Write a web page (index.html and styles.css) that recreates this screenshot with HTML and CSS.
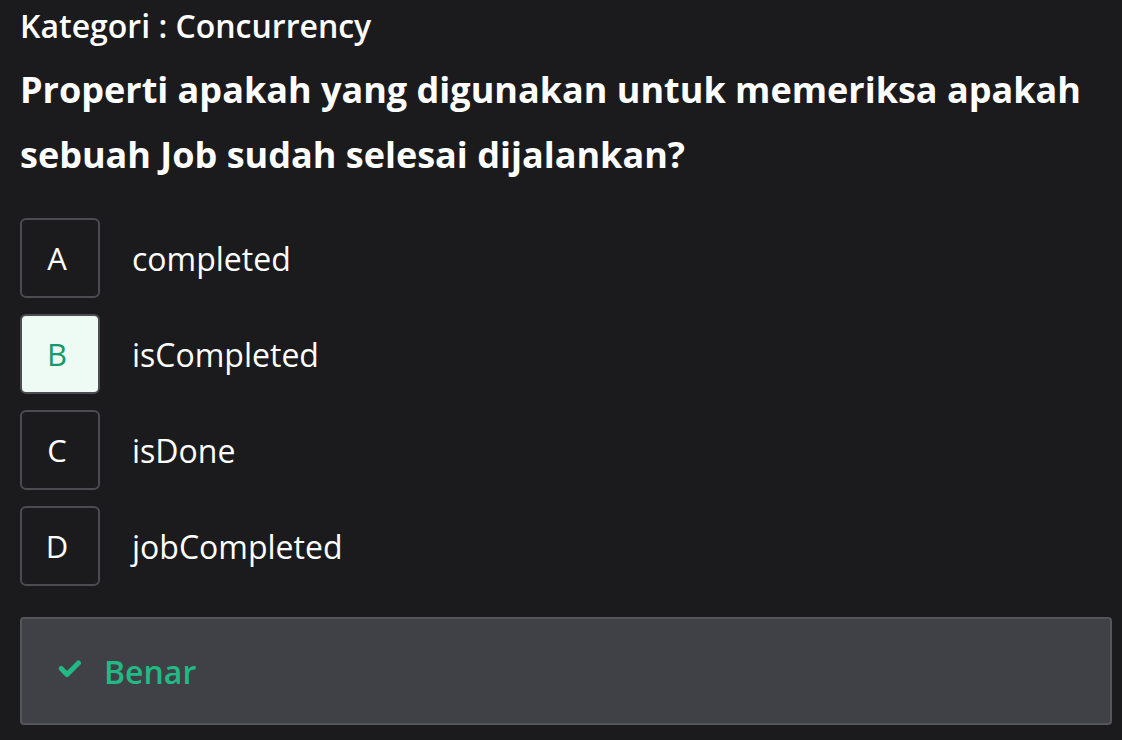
FILE: index.html
```html
<!DOCTYPE html>
<html lang="id">
<head>
<meta charset="utf-8">
<title>Kuis</title>
<link rel="stylesheet" href="styles.css">
</head>
<body>
<main class="quiz">
  <div class="category">Kategori : Concurrency</div>
  <h1 class="question">Properti apakah yang digunakan untuk memeriksa apakah sebuah Job sudah selesai dijalankan?</h1>
  <ul class="options">
    <li class="option"><span class="letter">A</span><span class="label">completed</span></li>
    <li class="option selected"><span class="letter">B</span><span class="label">isCompleted</span></li>
    <li class="option"><span class="letter">C</span><span class="label">isDone</span></li>
    <li class="option"><span class="letter">D</span><span class="label">jobCompleted</span></li>
  </ul>
  <div class="result">
    <svg class="check" viewBox="0 0 24 20" width="24" height="20" aria-hidden="true">
      <path d="M3.2 9.5 L9 15.5 L20.5 4" fill="none" stroke="#22b985" stroke-width="5" stroke-linecap="round" stroke-linejoin="round"/>
    </svg>
    <span class="result-text">Benar</span>
  </div>
</main>
</body>
</html>
```

FILE: styles.css
```css
html, body {
  margin: 0;
  padding: 0;
  background: #1b1b1d;
}
body {
  font-family: "Open Sans", "Noto Sans", sans-serif;
  color: #ffffff;
}
.quiz {
  padding: 4px 10px 0 20px;
}
.category {
  font-size: 32px;
  font-weight: 600;
  line-height: 44px;
}
.question {
  margin: 9px 0 0 0;
  font-size: 36px;
  font-weight: 700;
  line-height: 65px;
}
.options {
  list-style: none;
  margin: 31px 0 0 0;
  padding: 0;
  display: flex;
  flex-direction: column;
  gap: 16px;
}
.option {
  display: flex;
  align-items: center;
  gap: 32px;
}
.letter {
  box-sizing: border-box;
  width: 80px;
  height: 80px;
  padding-right: 6px;
  border: 2px solid #4b4b51;
  border-radius: 6px;
  display: flex;
  align-items: center;
  justify-content: center;
  font-size: 31px;
  font-weight: 400;
  color: #ffffff;
}
.option.selected .letter {
  background: #edfbf4;
  color: #17996a;
}
.label {
  font-size: 32px;
  font-weight: 400;
}
.result {
  margin-top: 31px;
  box-sizing: border-box;
  height: 108px;
  background: #404146;
  border: 2px solid #55565c;
  border-radius: 4px;
  display: flex;
  align-items: center;
  padding-left: 36px;
  gap: 22px;
}
.check {
  margin-bottom: 4px;
}
.result-text {
  font-size: 32px;
  font-weight: 600;
  color: #22b985;
}
```
